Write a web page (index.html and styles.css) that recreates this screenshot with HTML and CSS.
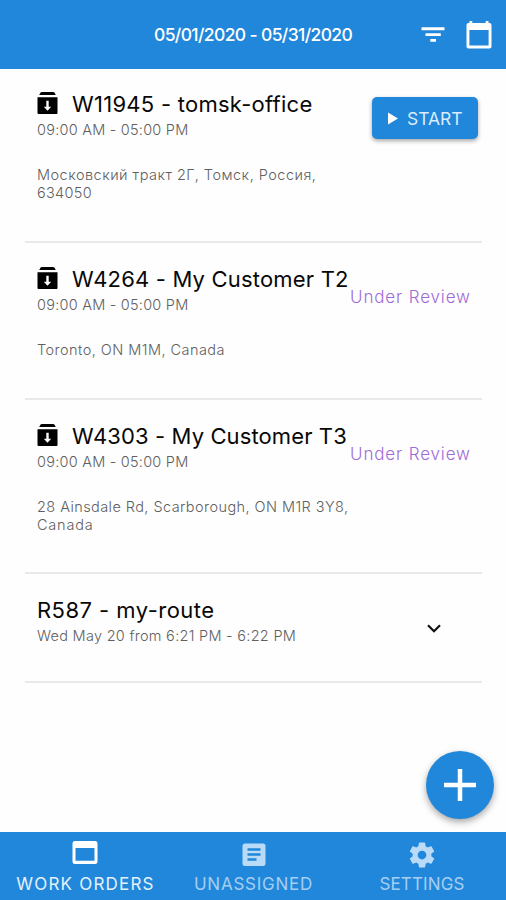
FILE: index.html
```html
<!DOCTYPE html>
<html lang="en">
<head>
<meta charset="utf-8">
<title>Work Orders</title>
<link rel="stylesheet" href="styles.css">
</head>
<body>
<svg class="sprite" aria-hidden="true">
  <symbol id="archive" viewBox="0 0 21 24">
    <path d="M2.2 4 3.6 1.6Q4 1 4.8 1H16.2Q17 1 17.4 1.6L18.8 4ZM.5 6.2H20.5V22.1Q20.5 23 19.6 23H1.4Q.5 23 .5 22.1ZM9.3 9.8V15.8H6.8L10.5 19.8 14.2 15.8H11.7V9.8Z"/>
  </symbol>
</svg>
<div class="app">
  <header class="topbar">
    <div class="range"><span>05/01/2020 - 05/31/2020</span></div>
    <svg class="filter" viewBox="0 0 24 18"><path d="M.5 1.3H23.5V4.3H.5ZM4.5 7.2H19.8V10H4.5ZM9.3 13H15V15.8H9.3Z"/></svg>
    <svg class="calendar" viewBox="0 0 26 28"><path fill-rule="evenodd" d="M3.5 0H6.3V2H19.7V0H22.5V2H23.5Q25.5 2 25.5 4V25.7Q25.5 27.5 23.5 27.5H2.5Q.5 27.5 .5 25.7V4Q.5 2 2.5 2H3.5ZM3.4 9V24.6H22.6V9Z"/></svg>
  </header>
  <main class="list">
    <article class="card card-tall">
      <div class="info">
        <h2 class="title"><svg class="box"><use href="#archive"/></svg><span class="t1">W11945 - tomsk-office</span></h2>
        <p class="time">09:00 AM - 05:00 PM</p>
        <p class="address"><span class="a1">Московский тракт 2Г, Томск, Россия,</span><br><span class="a2">634050</span></p>
      </div>
      <button class="start"><svg viewBox="0 0 10 13"><path d="M0 .5V12.5L10 6.5Z"/></svg><span>START</span></button>
    </article>
    <article class="card">
      <div class="info">
        <h2 class="title"><svg class="box"><use href="#archive"/></svg><span class="t2">W4264 - My Customer T2</span></h2>
        <p class="time">09:00 AM - 05:00 PM</p>
        <p class="address"><span class="a3">Toronto, ON M1M, Canada</span></p>
      </div>
      <div class="status">Under Review</div>
    </article>
    <article class="card card-tall">
      <div class="info">
        <h2 class="title"><svg class="box"><use href="#archive"/></svg><span class="t3">W4303 - My Customer T3</span></h2>
        <p class="time">09:00 AM - 05:00 PM</p>
        <p class="address"><span class="a4">28 Ainsdale Rd, Scarborough, ON M1R 3Y8,</span><br><span class="a5">Canada</span></p>
      </div>
      <div class="status">Under Review</div>
    </article>
    <article class="card card-route">
      <div class="info">
        <h2 class="title"><span class="t4">R587 - my-route</span></h2>
        <p class="time route-time">Wed May 20 from 6:21 PM - 6:22 PM</p>
      </div>
      <svg class="chevron" viewBox="0 0 14 9"><path d="M1 1.2 7 7.2 13 1.2"/></svg>
    </article>
  </main>
  <nav class="tabs">
    <a class="tab active">
      <svg viewBox="0 0 26 26"><path fill-rule="evenodd" d="M3 1H23Q25.5 1 25.5 3.5V21.5Q25.5 24 23 24H3Q.5 24 .5 21.5V3.5Q.5 1 3 1ZM3.5 8V20.7H22.5V8Z"/></svg>
      <span class="n1">WORK ORDERS</span>
    </a>
    <a class="tab">
      <svg viewBox="0 0 26 26"><path fill-rule="evenodd" d="M4 3.5H22Q24.5 3.5 24.5 6V24Q24.5 26 22 26H4Q1.5 26 1.5 24V6Q1.5 3.5 4 3.5ZM6.5 8.3V10.7H19.5V8.3ZM6.5 13.3V15.7H19.5V13.3ZM6.5 18.3V20.7H15.5V18.3Z"/></svg>
      <span class="n2">UNASSIGNED</span>
    </a>
    <a class="tab">
      <svg class="gear" viewBox="0 0 24 24"><path d="M19.43 12.98c.04-.32.07-.64.07-.98s-.03-.66-.07-.98l2.11-1.65c.19-.15.24-.42.12-.64l-2-3.46c-.12-.22-.39-.3-.61-.22l-2.49 1c-.52-.4-1.08-.73-1.69-.98l-.38-2.65C14.46 2.18 14.25 2 14 2h-4c-.25 0-.46.18-.49.42l-.38 2.65c-.61.25-1.17.59-1.69.98l-2.49-1c-.23-.09-.49 0-.61.22l-2 3.46c-.13.22-.07.49.12.64l2.11 1.65c-.04.32-.07.65-.07.98s.03.66.07.98l-2.11 1.65c-.19.15-.24.42-.12.64l2 3.46c.12.22.39.3.61.22l2.49-1c.52.4 1.08.73 1.69.98l.38 2.65c.03.24.24.42.49.42h4c.25 0 .46-.18.49-.42l.38-2.65c.61-.25 1.17-.59 1.69-.98l2.49 1c.23.09.49 0 .61-.22l2-3.46c.12-.22.07-.49-.12-.64l-2.11-1.65zM12 15.5c-1.93 0-3.5-1.57-3.5-3.5s1.57-3.5 3.5-3.5 3.5 1.57 3.5 3.5-1.57 3.5-3.5 3.5z"/></svg>
      <span class="n3">SETTINGS</span>
    </a>
  </nav>
  <button class="fab" aria-label="Add"><svg viewBox="0 0 32 32"><path d="M16 0V32M0 16H32"/></svg></button>
</div>
</body>
</html>
```
FILE: styles.css
```css
* { box-sizing: border-box; }
body, h2, p { margin: 0; }
body { font-family: Inter, "Noto Sans", sans-serif; background: #fefefe; }
.sprite { display: none; }
.app { position: relative; display: flex; flex-direction: column; width: 506px; height: 900px; overflow: hidden; white-space: nowrap; }
.topbar { flex: none; height: 69px; display: flex; align-items: center; background: #2187da; color: #fff; padding: 0 14px 0 154px; }
.topbar svg { fill: #fff; }
.range { flex: 1; font-size: 17.5px; font-weight: 500; letter-spacing: -.63px; }
.filter { width: 24px; height: 18px; margin-right: 21px; }
.calendar { width: 26px; height: 28px; }
.list { flex: 1; padding: 0 24px 0 25px; }
.card { display: flex; height: 157px; padding: 22px 4px 0 12px; border-bottom: 2px solid #e9e9eb; }
.card:first-child { padding-top: 21px; }
.card-tall { height: 174px; }
.card-route { height: 109px; }
.info { flex: 1; min-width: 0; }
.title { display: flex; align-items: center; height: 28px; font-size: 22px; font-weight: 400; color: #080808; }
.box { width: 21px; height: 24px; margin-right: 14px; flex: none; margin-top: -2px; }
.time { height: 22px; line-height: 22px; margin-top: 1px; font-size: 14.5px; font-weight: 300; color: #606060; letter-spacing: .23px; }
.route-time { letter-spacing: .28px; }
.address { margin-top: 25px; line-height: 18px; font-size: 14.5px; font-weight: 300; color: #606060; }
.t1 { letter-spacing: .27px; }
.t2 { letter-spacing: .19px; }
.t3 { letter-spacing: .11px; }
.t4 { letter-spacing: .46px; }
.a1 { letter-spacing: .48px; }
.a2 { letter-spacing: .3px; }
.a3 { letter-spacing: .45px; }
.a4 { letter-spacing: .43px; }
.a5 { letter-spacing: .8px; }
.start { display: flex; align-items: center; gap: 9px; width: 106px; height: 42px; margin-top: 7px; padding: 0 0 0 16px; border: 0; border-radius: 5px; background: #2187da; color: #dcecfb; box-shadow: 0 2px 4px rgba(0,0,0,.35); font: 400 17.5px Inter, sans-serif; }
.start svg { width: 10px; height: 13px; fill: #fff; }
.status { width: 125px; flex: none; margin-right: 3px; padding-top: 20px; margin-left: -10px; font-size: 17px; line-height: 24px; font-weight: 300; color: #a06bd8; letter-spacing: .87px; }
.chevron { width: 14px; height: 9px; margin: 28px 37px 0 0; fill: none; stroke: #111; stroke-width: 2.2; }
.tabs { flex: none; height: 68px; display: grid; grid-template-columns: 169px 169px 168px; background: #2187da; }
.tab { display: flex; flex-direction: column; align-items: center; padding-top: 8px; color: #a5cef2; font-size: 17px; line-height: 24px; }
.tab svg { width: 26px; height: 26px; margin-bottom: 6px; fill: #b9dbf8; }
.tab .gear { width: 30px; height: 30px; margin: 0 0 2px; }
.n1 { letter-spacing: 1.2px; padding-left: 2px; }
.n2 { letter-spacing: .75px; }
.n3 { letter-spacing: .15px; }
.active { color: #e5f2fd; }
.active svg { fill: #fff; }
.fab { position: absolute; left: 426px; top: 751px; width: 68px; height: 68px; display: flex; align-items: center; justify-content: center; border: 0; border-radius: 50%; padding: 0; background: #2187da; box-shadow: 0 3px 7px rgba(0,0,0,.35); }
.fab svg { width: 32px; height: 32px; stroke: #fff; stroke-width: 4.5; }
```
